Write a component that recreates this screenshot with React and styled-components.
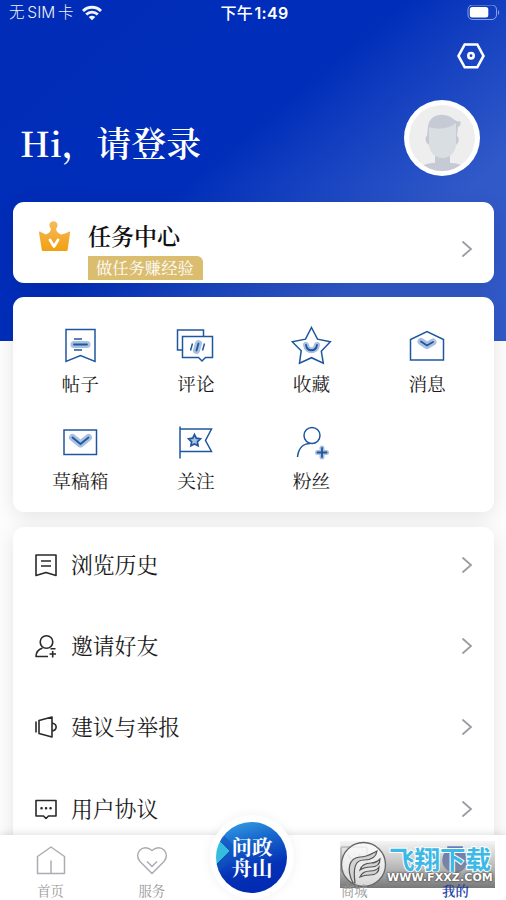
import React from 'react';
import styled, { createGlobalStyle } from 'styled-components';

const serif = '"Noto Serif CJK SC", "Noto Serif SC", "Liberation Serif", "Noto Sans CJK SC", serif';
const sans = 'Inter, "Noto Sans CJK SC", sans-serif';

const GlobalStyle = createGlobalStyle`
  * {
    box-sizing: border-box;
  }
  body {
    margin: 0;
    background: #fff;
  }
`;

const Screen = styled.div`
  display: flex;
  flex-direction: column;
  width: 506px;
  height: 900px;
  overflow: hidden;
  background: #fff;
  color: #1b1b1b;
  font-family: ${serif};
  white-space: nowrap;

  svg {
    display: block;
    flex: none;
  }
`;

const Content = styled.main`
  flex: 1;
  min-height: 0;
  overflow: hidden;
  background:
    linear-gradient(140deg, #002cb8 0%, #002db9 44%, #1743c1 58%, #3159c8 76%, #3159c8 100%) 0 0 / 100% 341px no-repeat,
    #fdfdfd;
`;

const StatusBar = styled.div`
  display: grid;
  grid-template-columns: 1fr auto 1fr;
  align-items: center;
  height: 26px;
  padding: 0 6px 0 9px;
  color: #fff;
  font: 15.5px/26px ${sans};

  .carrier {
    display: flex;
    align-items: center;
    gap: 8px;
    opacity: 0.95;
    font-weight: 300;
    word-spacing: -1.5px;
  }
  .time {
    font-size: 16px;
    font-weight: 600;
    word-spacing: -3px;
    letter-spacing: 0.3px;
  }
  .time b {
    font-weight: 500;
  }
  .battery {
    justify-self: end;
  }
`;

const Toolbar = styled.div`
  display: flex;
  justify-content: flex-end;
  padding: 16px 21px 0 0;
`;

const Profile = styled.header`
  display: flex;
  align-items: center;
  justify-content: space-between;
  height: 76px;
  margin-top: 30px;
  padding: 0 26px 0 20px;

  h1 {
    margin: 7px 0 0;
    color: #fff;
    font-size: 34.8px;
    line-height: 44px;
    font-weight: 600;
  }
`;

const Avatar = styled.div`
  width: 76px;
  height: 76px;
  padding: 5px;
  border-radius: 50%;
  background: #fff;
`;

const Card = styled.section`
  margin: 0 12px 0 13px;
  border-radius: 11px;
  background: #fff;
  box-shadow: 0 4px 20px rgba(0, 0, 0, 0.1);
`;

const TaskCard = styled(Card)`
  display: flex;
  height: 81px;
  margin-top: 25.5px;
  padding: 0 21px 0 25px;

  .crown {
    margin-top: 18px;
  }
  .text {
    flex: 1;
    margin-left: 17px;
    padding-top: 18px;
  }
  .arrow {
    align-self: center;
    margin-top: 13px;
  }
  h2 {
    margin: 0;
    color: #111;
    font-size: 23px;
    line-height: 31px;
    font-weight: 600;
  }
`;

const Badge = styled.span`
  display: block;
  width: 115px;
  height: 24px;
  margin-top: 5px;
  padding-left: 8px;
  border-radius: 0 6px 0 0;
  background: #dabd6f;
  color: #fff;
  font-size: 16.3px;
  line-height: 23px;
`;

const GridCard = styled(Card)`
  display: grid;
  grid-template-columns: repeat(4, 115.6px);
  grid-auto-rows: 97px;
  height: 215px;
  margin-top: 14px;
  padding: 28px 0 0 9.5px;
`;

const GridItem = styled.div`
  display: flex;
  flex-direction: column;
  align-items: center;
  gap: 3px;
  font-size: 18.7px;
  line-height: 27px;

  svg {
    margin-top: -1px;
  }
`;

const ListCard = styled(Card)`
  height: 400px;
  margin-top: 15px;
  padding-top: 0;
`;

const ListRow = styled.div`
  display: flex;
  align-items: center;
  height: 81.2px;
  padding: 0 21px;

  svg {
    margin-bottom: 4px;
  }
  span {
    flex: 1;
    margin: 0 0 6px 13px;
    font-size: 21.8px;
    line-height: 32px;
  }
`;

const TabBar = styled.nav`
  position: relative;
  display: grid;
  grid-template-columns: repeat(5, 1fr);
  height: 65px;
  background: #fff;
  box-shadow: 0 0 9px rgba(0, 0, 0, 0.16);
`;

const Tab = styled.div`
  display: flex;
  flex-direction: column;
  align-items: center;
  padding-top: 9px;
  color: ${({ $active }) => ($active ? '#1c3ea6' : '#999')};
  font-size: 13.3px;
  font-weight: ${({ $active }) => ($active ? 600 : 400)};
  line-height: 20px;

  svg {
    margin-bottom: 5px;
  }
  span {
    z-index: 1;
  }
`;

const CenterButton = styled.div`
  display: flex;
  align-items: center;
  justify-content: center;
  align-self: start;
  justify-self: center;
  width: 84px;
  height: 84px;
  margin: -20px 0 0 -2px;
  border-radius: 50%;
  background: #fff;
  box-shadow: 0 0 12px rgba(0, 0, 0, 0.06);

  > div {
    display: flex;
    flex-direction: column;
    align-items: center;
    justify-content: center;
    width: 71px;
    height: 71px;
    border-radius: 50%;
    background:
      conic-gradient(from 225deg at 19% 41%, #34bddc 0 90deg, transparent 0),
      conic-gradient(from 225deg at 33% 41%, rgba(18, 80, 190, 0.55) 0 90deg, transparent 0),
      linear-gradient(165deg, #3aa5e5 0%, #1769ce 30%, #0431b5 64%, #0028b1 100%);
    color: #fff;
    font-size: 20.5px;
    font-weight: 700;
    line-height: 21.5px;
  }
`;

const Watermark = styled.div`
  position: absolute;
  top: 6px;
  left: 340px;
  display: flex;
  align-items: center;
  width: 155px;
  height: 47px;
  background: linear-gradient(rgba(225, 225, 225, 0.35), rgba(155, 155, 155, 0.75) 60%, rgba(105, 105, 105, 0.9));
  font-family: "Noto Sans CJK SC", sans-serif;

  .name {
    color: #3cb9e6;
    font-size: 25.5px;
    font-weight: 700;
    line-height: 27px;
    -webkit-text-stroke: 2px #fff;
    paint-order: stroke fill;
    margin-left: 2px;
  }
  .site {
    color: #fff;
    font: 700 11px/14px "DejaVu Sans", sans-serif;
    letter-spacing: 0.1px;
    text-shadow: 0 0 2px #444, 0 0 2px #444;
  }
`;

const BLUE = '#1f579f';
const GLOW = '#a9c0e1';

const Icon = ({ w = 40, h = w, color = BLUE, sw = 1.5, children, ...rest }) => (
  <svg width={w} height={h} viewBox={`0 0 ${w} ${h}`} fill="none" stroke={color} strokeWidth={sw} {...rest}>
    {children}
  </svg>
);

const Chevron = () => (
  <Icon w={12} h={18} color="#999ca1" sw={1.8} strokeLinecap="round">
    <path d="M2 2l8 7-8 7" />
  </Icon>
);

// mark drawn over a wide pale stroke of the same shape
const Glow = ({ d, width = 6 }) => (
  <>
    <path d={d} stroke={GLOW} strokeWidth={width} strokeLinecap="round" strokeLinejoin="round" />
    <path d={d} strokeWidth="1.8" strokeLinecap="round" />
  </>
);

const shortcuts = [
  {
    label: '帖子',
    icon: <><path d="M6 5.500h29v32l-14.500-6-14.500 6z" /><Glow d="M14 20.500h13" width={7} /><path d="M14 15h8M14 26h8" /></>,
  },
  {
    label: '评论',
    icon: <><path d="M7.500 26H2.500V6h26v6" /><path d="M7.500 12.500h30v21h-7l-3.500 3.500-3.500-3.500h-16z" /><Glow d="M23.500 19.500l-2 7" width={7} /><path d="M17.500 19.500l-2 7M29.500 19.500l-2 7" /></>,
  },
  {
    label: '收藏',
    icon: <><path d="M20.500 3.500l6 11.700 12.800 2.500-9 9.500 2 12-11.800-5.500-12 5.500 1.700-12.500-9-9 13.300-2.500z" /><Glow d="M15 21c1 7 10 7 11 0" /></>,
  },
  {
    label: '消息',
    icon: <><path d="M3.500 36V15.500L20 7.500l16.500 8V36z" /><Glow d="M14 17.500l6 4 6-3.500" width={7} /></>,
  },
  {
    label: '草稿箱',
    icon: <><path d="M4 9h32.500v24.500H4z" /><Glow d="M12.500 16.500l8 6.500 8-6.500" width={7} /></>,
  },
  {
    label: '关注',
    icon: <><path d="M5 5.500v32M5 8h31.500l-6 11.500 6 11H5" /><path d="M19.500 13.500l1.800 3.700 4.100.6-3 3 .7 4-3.600-1.900-3.600 1.900.7-4-3-3 4.100-.6z" fill={GLOW} strokeWidth="1.700" /></>,
  },
  {
    label: '粉丝',
    icon: <><circle cx="21" cy="14.500" r="8" /><path d="M6.500 36c1-9 6-13.500 12.500-13.500" /><Glow d="M31 27v9M26.500 31.500h9" width={5} /></>,
  },
];

const menu = [
  {
    label: '浏览历史',
    icon: <path d="M2 2h20v20.500L12 19.500 2 22.500zM7 8h10M7 13h10" />,
  },
  {
    label: '邀请好友',
    icon: <><circle cx="12.500" cy="8" r="6.300" /><path d="M8.500 14C4 15.500 2 18 2 22.500h12M16.500 14.800h5M18.700 17v6.500M15.500 20h6.500" /></>,
  },
  {
    label: '建议与举报',
    icon: <path d="M2 6.500v11M5 5.500l13-3.500v20L5 18.500zM18 8c5.500 1 5.500 7 0 8" />,
  },
  {
    label: '用户协议',
    icon: <><path d="M2 3.500h20v15.500h-7.500L12 21.500 9.500 19H2z" /><path d="M7.500 11.200h.1M12 11.200h.1M16.500 11.200h.1" strokeWidth="2.500" strokeLinecap="round" /></>,
  },
];

const App = () => (
  <>
    <GlobalStyle />
    <Screen>
      <Content>
        <StatusBar>
          <div className="carrier">
            无 SIM 卡
            <svg width="20" height="16" viewBox="0 0 20 16" fill="none" stroke="#fff" strokeWidth="2.800">
              <path d="M1 6c5-5 13-5 18 0M4.200 9.500c3.400-3.300 8.200-3.300 11.600 0" />
              <path d="M6.700 12c2-1.800 4.600-1.800 6.600 0L10 15.300z" fill="#fff" stroke="none" />
            </svg>
          </div>
          <div className="time"><b>下午</b> 1:49</div>
          <svg className="battery" width="33" height="17" viewBox="0 0 33 17">
            <rect x="1" y="0" width="28.500" height="14.500" rx="4.500" fill="none" stroke="#fff" strokeOpacity=".5" />
            <rect x="2.800" y="2" width="18.500" height="10.500" rx="2.500" fill="#fff" />
            <path d="M31 5v5c1.600-.8 1.600-4.200 0-5" fill="#fff" fillOpacity=".5" />
          </svg>
        </StatusBar>
        <Toolbar>
          <Icon w={28} color="#fff" sw={2.600}>
            <path d="M7.700 2.500h12.600L26.500 14l-6.200 11.300H7.700L1.500 14z" />
            <circle cx="14" cy="13.700" r="2.700" />
          </Icon>
        </Toolbar>
        <Profile>
          <h1>Hi，请登录</h1>
          <Avatar>
            <svg width="66" height="66" viewBox="0 0 66 66">
              <defs>
                <clipPath id="face"><circle cx="33" cy="33" r="33" /></clipPath>
              </defs>
              <g clipPath="url(#face)">
                <path d="M0 0h66v66H0z" fill="#eee" />
                <path d="M26 48h15v10c6 0 11 1 13 4v4H13v-4c2-3 7-4 13-4z" fill="#c6cad4" />
                <path d="M18 31c-3 1-1 9 3 9h25c4 0 5-8 2-9l1-9c3-1 3-4 2-6-2 1-4 0-8-3-9-6-22-4-24 8z" fill="#c6cad4" />
                <path d="M20 22c8 3 20 2 27-4v21c0 9-7 14-13.500 14S20 48 20 39z" fill="#d9dee2" />
              </g>
            </svg>
          </Avatar>
        </Profile>

        <TaskCard>
          <svg className="crown" width="33" height="33" viewBox="0 0 33 33">
            <defs>
              <linearGradient id="gold" x1="0" y1="0" x2="0" y2="1">
                <stop offset="0" stopColor="#f5bb5d" />
                <stop offset="1" stopColor="#f1a010" />
              </linearGradient>
            </defs>
            <path d="M12.800 8.500a4.100 4.100 0 1 1 5.400 0c-.3 2 .8 4.500 4.800 6 3.500-.4 6-1.800 8.300-3 .7 0 .9.400.8 1.100L29.600 30c-.1.700-.5 1-1.200 1H5c-.7 0-1.100-.3-1.200-1L1 12.400c-.1-.7.300-1.200 1-.9 2.200 1.200 4.600 2.600 6 3 4-1.500 5.100-4 4.800-6z" fill="url(#gold)" />
            <path d="M12 20l4 6.500 4-6.500" fill="none" stroke="#fff" strokeWidth="2.800" strokeLinecap="round" strokeLinejoin="round" />
          </svg>
          <div className="text">
            <h2>任务中心</h2>
            <Badge>做任务赚经验</Badge>
          </div>
          <div className="arrow"><Chevron /></div>
        </TaskCard>

        <GridCard>
          {shortcuts.map(({ label, icon }) => (
            <GridItem key={label}>
              <Icon w={41} h={42}>{icon}</Icon>
              {label}
            </GridItem>
          ))}
        </GridCard>

        <ListCard>
          {menu.map(({ label, icon }) => (
            <ListRow key={label}>
              <Icon w={24} color="#292929" sw={1.600} strokeLinejoin="round">{icon}</Icon>
              <span>{label}</span>
              <Chevron />
            </ListRow>
          ))}
        </ListCard>
      </Content>

      <TabBar>
        <Tab>
          <Icon w={32} color="#aaadb2" strokeLinejoin="round">
            <path d="M2.500 29.500V12.500L16 3l13.500 9.500v17zM16 16.500v13" />
          </Icon>
          <span>首页</span>
        </Tab>
        <Tab>
          <Icon w={32} color="#aaadb2" strokeLinejoin="round">
            <path d="M16 29.500L4 17.500C-3 9.500 7-1.500 16 6.500c9-8 19 3 12 11zM11 17.500l5 5 5-5" />
          </Icon>
          <span>服务</span>
        </Tab>
        <CenterButton>
          <div>
            <span>问政</span>
            <span>舟山</span>
          </div>
        </CenterButton>
        <Tab>
          <Icon w={32} color="#aaadb2">
            <rect x="3" y="3" width="26" height="25" rx="2" />
            <path d="M10 10c1 7 11 7 12 0" />
          </Icon>
          <span>商城</span>
        </Tab>
        <Tab $active>
          <Icon w={32} color="#2445a8" fill="#2445a8">
            <path d="M9 3h14v8H9z" />
            <circle cx="16" cy="16" r="12" />
          </Icon>
          <span>我的</span>
        </Tab>
        <Watermark>
          <svg width="47" height="47" viewBox="0 0 47 47">
            <circle cx="23.500" cy="23.500" r="22" fill="#fff" fillOpacity=".7" stroke="#666" strokeWidth="1.300" />
            <path d="M13 42C6 28 9 17 20 16c7 0 11-3 17-6-1 7-6 9-13 9-9 0-11 8-9 23zM20 29c2-6 7-7 11-7 4 0 6-1 9-4 0 6-4 8-9 8-5 0-8 1-11 3zM20 36c2-5 6-6 10-6 4 0 7-1 9-4 0 6-4 8-9 8-4 0-6 0-10 2z" fill="#d2d2d2" stroke="#555" strokeWidth="1.200" />
          </svg>
          <div>
            <div className="name">飞翔下载</div>
            <div className="site">WWW.FXXZ.COM</div>
          </div>
        </Watermark>
      </TabBar>
    </Screen>
  </>
);

export default App;
